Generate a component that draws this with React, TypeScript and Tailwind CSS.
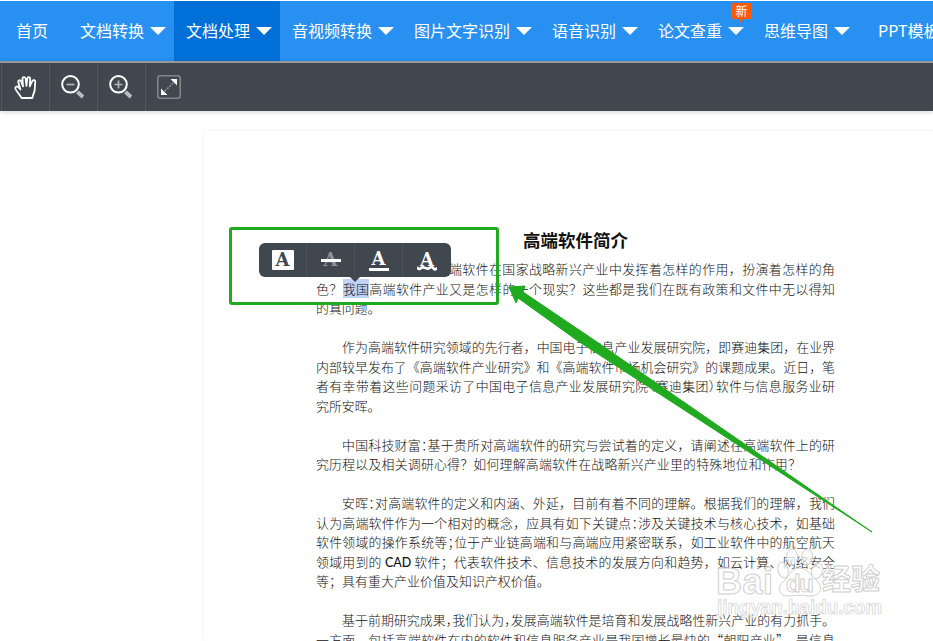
import type { ReactNode } from "react";

type NavItem = {
  label: string;
  active?: boolean;
  badge?: string;
};

const navItems: NavItem[] = [
  { label: "文档转换" },
  { label: "文档处理", active: true },
  { label: "音视频转换" },
  { label: "图片文字识别" },
  { label: "语音识别" },
  { label: "论文查重", badge: "新" },
  { label: "思维导图" },
];

type LineProps = {
  children: ReactNode;
  className?: string;
  last?: boolean;
};

// One typeset line of the document, spread over the full measure unless it closes a paragraph.
function Line({ children, className = "", last = false }: LineProps) {
  return (
    <div
      className={`h-[19.5px] w-[519px] whitespace-nowrap ${
        last ? "" : "text-justify [text-align-last:justify]"
      } ${className}`}
    >
      {children}
    </div>
  );
}

// Punctuation squeezed to half an em
function Half({ children }: { children: ReactNode }) {
  return <span className="[font-feature-settings:'halt']">{children}</span>;
}

function NavBar() {
  return (
    <nav className="mt-px flex h-[60px] shrink-0 bg-[#2890f0] text-[16px] leading-[58px] whitespace-nowrap text-white">
      <a className="w-[68px] shrink-0 pl-4">首页</a>
      {navItems.map((item) => (
        <a
          key={item.label}
          className={`relative flex shrink-0 pr-2 pl-3 ${
            item.active ? "bg-[#0070d8]" : ""
          }`}
        >
          {item.label}
          <svg width="16" height="8" viewBox="0 0 16 8" className="mt-[26px] ml-1.5">
            <path d="M0 0h16L8 8z" fill="#fff" />
          </svg>
          {item.badge ? (
            <span className="absolute top-[2px] right-0 h-4 w-[21px] rounded-[2px] bg-[#ff5a00] text-center text-[12px] leading-4">
              {item.badge}
              <svg width="5" height="5" viewBox="0 0 5 5" className="absolute top-[15px] left-2">
                <path d="M0 0h5L1 5z" fill="#ff5a00" />
              </svg>
            </span>
          ) : null}
        </a>
      ))}
      <a className="shrink-0 pl-5">PPT模板</a>
    </nav>
  );
}

function ToolBar() {
  return (
    <div className="relative z-10 flex h-[50px] shrink-0 border-t-2 border-[#95989b] bg-[#40474f] pl-px shadow-[0_1px_5px_rgba(0,0,0,0.18)]">
      <button className="flex w-12 items-center justify-center border-l border-[#4c5762]">
        <svg width="24" height="24" viewBox="0 0 24 24" fill="none" stroke="#fff" strokeWidth="1.8" strokeLinecap="round" strokeLinejoin="round">
          <path d="M7.500 23C6 19.500 3 17.500 1.500 14c-.8-2.200 1.600-3.200 2.900-1.800L6.400 14.500 4.300 7.300c-.5-2.100 2-2.900 2.800-.9l1.900 5-.5-7.300c0-2.500 3-2.500 3.200-.1l.7 6.900.9-7.300c.4-2.200 3.100-2 2.900.4l-.5 7.400 2.400-5.100c.9-2 3.500-1.200 3.100 1L20.700 15c-.5 3.500-2 5-2.300 8z" />
        </svg>
      </button>
      <button className="flex w-12 items-center border-l border-[#4c5762] pl-[11px]">
        <ZoomIcon />
      </button>
      <button className="flex w-12 items-center border-l border-[#4c5762] pl-[11px]">
        <ZoomIcon plus />
      </button>
      <button className="flex w-12 items-center border-l border-[#4c5762] pl-[11px]">
        <svg width="24" height="24" viewBox="0 0 24 24" fill="none">
          <rect x="0.800" y="0.800" width="22.400" height="22.400" rx="2.500" stroke="#81868e" strokeWidth="1.600" />
          <path d="M8 16l8-8" stroke="#9da1a6" strokeWidth="1.500" strokeDasharray="1.800 1.400" />
          <path d="M13.500 4H20v6.500zM4 13.500V20h6.500z" fill="#fff" />
        </svg>
      </button>
    </div>
  );
}

function ZoomIcon({ plus = false }: { plus?: boolean }) {
  return (
    <svg width="24" height="24" viewBox="0 0 24 24" fill="none">
      <path d="M16.500 17l5.500 5" stroke="#b9bcc0" strokeWidth="3.800" />
      <circle cx="9.500" cy="9.300" r="8.300" stroke="#fff" strokeWidth="2" />
      <path d={plus ? "M5.500 9.500h8M9.500 5.500v8" : "M5.500 9.500h8"} stroke="#b3b6ba" strokeWidth="1.700" />
    </svg>
  );
}

function DocumentPage() {
  return (
    <main className="mt-[19px] ml-[203px] h-[511px] border-t border-l border-[#f8f8f8] pl-[112px] shadow-[0_0_4px_rgba(0,0,0,0.02)]">
      <h1 className="mt-[97px] h-[31px] w-[519px] text-center text-[17.5px] leading-6 font-bold text-[#111]">
        高端软件简介
      </h1>
      <article className="text-[12.9px] leading-[19.5px] font-light text-[#111]">
        <Line className="pl-[133px]">端软件在国家战略新兴产业中发挥着怎样的作用，扮演着怎样的角</Line>
        <Line>
          色？<span className="bg-[#bfd3f6]">我国</span>高端软件产业又是怎样的一个现实？这些都是我们在既有政策和文件中无以得知
        </Line>
        <Line last>的真问题。</Line>

        <Line className="mt-[19.5px] pl-[26px]">作为高端软件研究领域的先行者，中国电子信息产业发展研究院，即赛迪集团，在业界</Line>
        <Line>内部较早发布了《高端软件产业研究》和《高端软件市场机会研究》的课题成果。近日，笔</Line>
        <Line>
          者有幸带着这些问题采访了中国电子信息产业发展研究院<Half>（</Half>赛迪集团<Half>）</Half>软件与信息服务业研
        </Line>
        <Line last>究所安晖。</Line>

        <Line className="mt-[19.5px] pl-[26px]">
          中国科技财富<Half>：</Half>基于贵所对高端软件的研究与尝试着的定义，请阐述在高端软件上的研
        </Line>
        <Line last className="tracking-[0.22px]">究历程以及相关调研心得？如何理解高端软件在战略新兴产业里的特殊地位和作用？</Line>

        <Line className="mt-[19.5px] pl-[26px]">
          安晖<Half>：</Half>对高端软件的定义和内涵、外延，目前有着不同的理解。根据我们的理解，我们
        </Line>
        <Line>
          认为高端软件作为一个相对的概念，应具有如下关键点<Half>：</Half>涉及关键技术与核心技术，如基础
        </Line>
        <Line>
          软件领域的操作系统等<Half>；</Half>位于产业链高端和与高端应用紧密联系，如工业软件中的航空航天
        </Line>
        <Line>
          领域用到的 <span className="font-['Lato'] text-[12.5px] font-medium">CAD</span> 软件；代表软件技术、信息技术的发展方向和趋势，如云计算、网络安全
        </Line>
        <Line last className="tracking-[0.1px]">等；具有重大产业价值及知识产权价值。</Line>

        <Line className="mt-[19.5px] pl-[26px]">
          基于前期研究成果<Half>，</Half>我们认为<Half>，</Half>发展高端软件是培育和发展战略性新兴产业的有力抓手。
        </Line>
        <Line>一方面，包括高端软件在内的软件和信息服务产业是我国增长最快的“朝阳产业”，是信息</Line>
      </article>
    </main>
  );
}

function MarkupPopup() {
  return (
    <div className="absolute top-[243px] left-[259px] flex h-[34px] w-48 rounded-md bg-[#40474f] font-['DejaVu_Serif'] text-[18px] font-bold text-white">
      <button className="flex w-12 items-center justify-center border-r border-[#4c535b]">
        <span className="h-[20px] w-[22px] rounded-[1px] bg-white text-center leading-[20px] text-[#40474f]">A</span>
      </button>
      <button className="relative flex w-12 items-center justify-center border-r border-[#4c535b]">
        <span className="h-[20px] leading-[19px] text-[#8f949a]">A</span>
        <svg width="20" height="3" className="absolute top-[16px] left-[14px]">
          <rect width="20" height="3" fill="#fff" />
        </svg>
      </button>
      <button className="flex w-12 items-center justify-center border-r border-[#4c535b]">
        <span className="h-[22px] w-5 border-b-3 border-white text-center leading-[19px]">A</span>
      </button>
      <button className="flex w-12 flex-col items-center pt-[7px]">
        <span className="h-[15px] leading-[19px]">A</span>
        <svg width="20" height="6" viewBox="0 0 20 6" fill="none">
          <path d="M0 2q1.700 3 3.400 1.500T6.700 2.500t3.300 1 3.300-1 3.300 1T20 2.500" stroke="#fff" strokeWidth="2.600" />
        </svg>
      </button>
      <svg width="10" height="5" viewBox="0 0 10 5" className="absolute top-[34px] left-[91px]">
        <path d="M0 0h10L5 5z" fill="#40474f" />
      </svg>
    </div>
  );
}

function Watermark() {
  return (
    <div className="absolute top-[543px] left-[716px] h-[76px] w-[170px] font-['Liberation_Sans','Noto_Sans_CJK_SC',sans-serif]">
      <svg width="170" height="76" viewBox="0 0 170 76" fill="#fff" fillOpacity="0.7" stroke="#cfcfcf" strokeWidth="1">
        <ellipse cx="67" cy="27" rx="5" ry="8" transform="rotate(-15 67 27)" />
        <ellipse cx="76" cy="14" rx="5.500" ry="8" />
        <ellipse cx="91" cy="14" rx="5.500" ry="8" transform="rotate(10 91 14)" />
        <ellipse cx="101" cy="28" rx="5.500" ry="8" transform="rotate(18 101 28)" />
        <path d="M83 25c-8 0-9 8-15 13-8 6-5 16 5 15 8-1 12-1 20 0 11 1 15-8 8-15-7-6-9-13-18-13z" />
        <text x="0" y="51" fontSize="36" fontWeight="bold" textLength="57">Bai</text>
        <text x="70" y="49" fontSize="24" fontWeight="bold" textLength="28">du</text>
        <text x="106" y="47" fontSize="29" fontWeight="bold" textLength="58">经验</text>
        <text x="1" y="71" fontSize="20" fontWeight="bold" strokeWidth="0.700" textLength="165" lengthAdjust="spacingAndGlyphs">jingyan.baidu.com</text>
      </svg>
    </div>
  );
}

export default function App() {
  return (
    <div className="relative flex h-[641px] w-[933px] flex-col overflow-hidden bg-white font-['Noto_Sans_CJK_SC',sans-serif]">
      <NavBar />
      <ToolBar />
      <DocumentPage />
      <MarkupPopup />
      <Watermark />
      <div className="absolute top-[227px] left-[229px] h-[78px] w-[270px] rounded-[3px] border-3 border-[#1faa1f]" />
      <svg width="370" height="250" viewBox="505 284 370 250" className="absolute top-[284px] left-[505px]">
        <path d="M509 287l16-1-2 6 71 48 278 192-294-191-60-43-2 5z" fill="#1faa1f" stroke="#1faa1f" strokeLinejoin="round" />
      </svg>
    </div>
  );
}
